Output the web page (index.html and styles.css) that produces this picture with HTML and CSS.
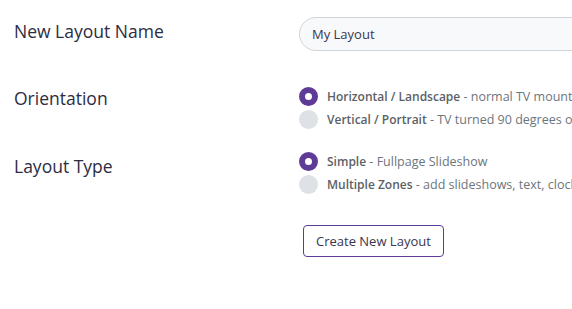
FILE: index.html
```html
<!DOCTYPE html>
<html lang="en">
<head>
    <meta charset="UTF-8">
    <meta name="viewport" content="width=device-width, initial-scale=1.0">
    <title>New Layout</title>
    <link rel="stylesheet" href="styles.css">
</head>
<body>

<form class="layout-form">
    <div class="form-row row-name">
        <label class="form-label" for="layout_name">New Layout Name</label>
        <div class="form-field">
            <input type="text" id="layout_name" class="text-input" value="My Layout">
        </div>
    </div>

    <div class="form-row row-orientation">
        <div class="form-label">Orientation</div>
        <div class="form-field">
            <label class="radio-item">
                <span class="radio checked"></span>
                <span class="radio-text"><b>Horizontal / Landscape</b> - normal TV mounting</span>
            </label>
            <label class="radio-item">
                <span class="radio"></span>
                <span class="radio-text"><b>Vertical / Portrait</b> - TV turned 90 degrees on its side</span>
            </label>
        </div>
    </div>

    <div class="form-row row-type">
        <div class="form-label">Layout Type</div>
        <div class="form-field">
            <label class="radio-item">
                <span class="radio checked"></span>
                <span class="radio-text"><b>Simple</b> - Fullpage Slideshow</span>
            </label>
            <label class="radio-item">
                <span class="radio"></span>
                <span class="radio-text"><b>Multiple Zones</b> - add slideshows, text, clocks and more</span>
            </label>
        </div>
    </div>

    <div class="form-row row-submit">
        <div></div>
        <div class="form-field">
            <button type="submit" class="button">Create New Layout</button>
        </div>
    </div>
</form>

</body>
</html>
```

FILE: styles.css
```css
body {
    font-family: "Open Sans", "Noto Sans", sans-serif;
    margin: 0;
    padding: 0;
    background-color: #fff;
    color: #212529;
    overflow: hidden;
}
.layout-form {
    padding: 17px 0 0 14px;
}
.form-row {
    display: grid;
    grid-template-columns: 285px 1fr;
    white-space: nowrap;
}
.form-label {
    font-size: 17.5px;
    color: #2b2d42;
    line-height: 28px;
}
.form-field {
    min-width: 0;
    overflow: hidden;
}
.row-name {
    margin-bottom: 34px;
}
.row-orientation {
    margin-bottom: 19px;
}
.row-orientation .form-label {
    margin-top: -1px;
}
.row-type .form-label {
    padding-top: 2px;
}
.row-type {
    margin-bottom: 29px;
}
.text-input {
    width: 320px;
    height: 34px;
    box-sizing: border-box;
    padding: 0 12px;
    border: 1px solid #ced4da;
    border-radius: 17px;
    background-color: #f8f9fa;
    font-family: inherit;
    font-size: 13px;
    color: #3a3550;
    outline: none;
}
.radio-item {
    display: flex;
    align-items: center;
    height: 23px;
    font-size: 12.5px;
    color: #6c757d;
}
.radio {
    width: 19px;
    height: 19px;
    border-radius: 50%;
    background-color: #dee2e6;
    margin-right: 9px;
    box-sizing: border-box;
    flex-shrink: 0;
}
.radio.checked {
    border: 6px solid #5f3b98;
    background-color: #fff;
}
.radio-text b {
    font-size: 12px;
    font-weight: 600;
    color: #5c5f66;
}
.button {
    margin-left: 4px;
    background-color: #fff;
    color: #3a3550;
    font-family: inherit;
    font-size: 13px;
    padding: 0 12px;
    height: 32px;
    border: 1px solid #5f3b98;
    border-radius: 4px;
    cursor: pointer;
}
.button:hover {
    background-color: #f3eefa;
}
```
